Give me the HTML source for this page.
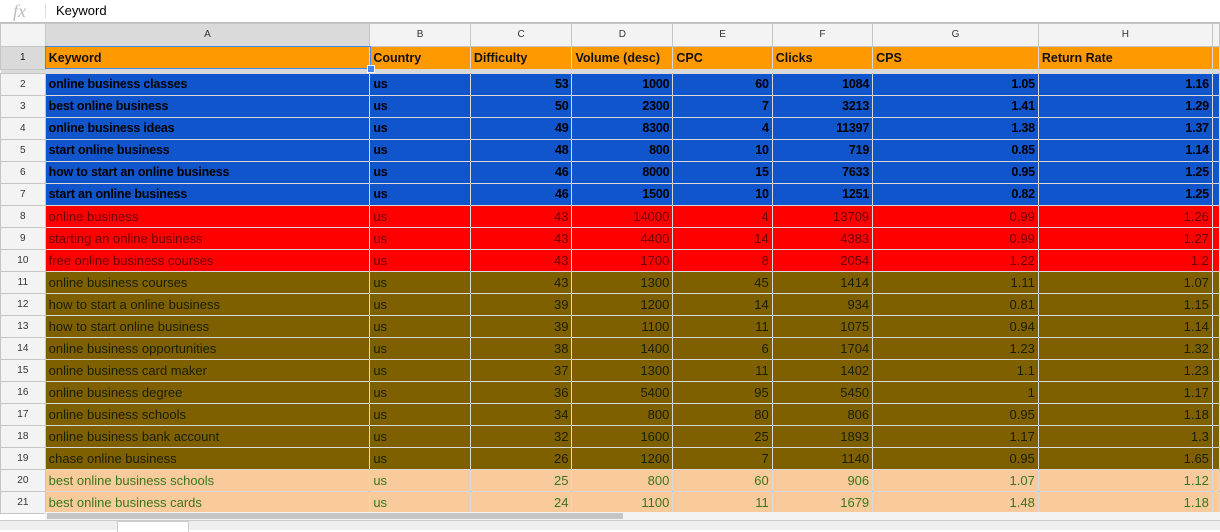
<!DOCTYPE html>
<html><head><style>
body{margin:0;width:1220px;height:529px;overflow:hidden;background:#fff;font-family:"Liberation Sans",sans-serif;position:relative}
.fx{position:absolute;left:0;top:0;width:1220px;height:22px;border-bottom:1px solid #c0c0c0;background:#fff}
.fx i{position:absolute;left:13px;top:1px;font-family:"Liberation Serif",serif;font-size:18px;color:#bbb}
.fx .sep{position:absolute;left:45px;top:3px;width:1px;height:15px;background:#ddd}
.fx span{position:absolute;left:56px;top:3px;font-size:13px;color:#000}
table{position:absolute;left:0;top:23px;border-collapse:collapse;table-layout:fixed}
td{padding:0 3px;font-size:13px;white-space:nowrap;overflow:hidden;border:1px solid rgba(0,0,0,.15);height:21px;line-height:21px;vertical-align:top}
td b,td span{display:block;position:relative;top:1px}
td.n{background:#f3f3f3;color:#333;font-size:10px;text-align:center;border-color:#c6c6c6;padding:0;line-height:21px}
tr.h td{background:#f3f3f3;color:#333;font-size:10px;text-align:center;height:22px;line-height:22px;border-color:#c6c6c6}
tr.h td.sel{background:#dadada}
tr.r1 td{background:#ff9900;font-weight:bold;font-size:12.5px;color:#111;height:21px;line-height:22px}
tr.r1 td.n{background:#dadada;font-weight:normal;font-size:10px}
tr.fz td{height:3px;line-height:3px;font-size:1px;background:#dadada;border:none;padding:0}
.R{text-align:right}
tr.b td{background:#1155cc;font-weight:bold;font-size:12.5px;color:#000;letter-spacing:-0.2px;line-height:23px}
tr.rd td{background:#ff0000;color:#6a0000;line-height:23px}
tr.br td{background:#7f6000;color:#1a1f00;line-height:23px}
tr.p td{background:#f9cb9c;color:#38761d;line-height:23px}
tr.b td.n,tr.rd td.n,tr.br td.n,tr.p td.n{background:#f3f3f3;color:#333;font-weight:normal;font-size:10px;letter-spacing:0;line-height:21px}
tr td{max-height:21px}
.selbox{position:absolute;left:45px;top:46px;width:324px;height:21px;border:1px solid #4285f4}
.hnd{position:absolute;left:367px;top:65px;width:6px;height:6px;background:#4285f4;border:1px solid #fff}
.scroll{position:absolute;left:45px;top:512px;width:1175px;height:8px;background:#f3f3f3}
.scroll div{position:absolute;left:2px;top:1px;width:576px;height:6px;background:#c6c6c6}
.tabs{position:absolute;left:0;top:520px;width:1220px;height:9px;background:#eee;border-top:1px solid #ccc}
.tabs div{position:absolute;left:117px;top:0;width:70px;height:10px;background:#fff;border:1px solid #ccc;border-bottom:none}
tr.b td:not(.n),tr.rd td:not(.n),tr.br td:not(.n),tr.p td:not(.n){line-height:21px;padding-top:0}
tr.b,tr.rd,tr.br,tr.p{height:22px}
</style></head><body>
<div class="fx"><i>fx</i><div class="sep"></div><span>Keyword</span></div>
<table>
<colgroup><col style="width:45px"><col style="width:326px"><col style="width:101px"><col style="width:102px"><col style="width:101px"><col style="width:100px"><col style="width:101px"><col style="width:167px"><col style="width:175px"><col style="width:2px"></colgroup>
<tr class="h"><td></td><td class="sel">A</td><td>B</td><td>C</td><td>D</td><td>E</td><td>F</td><td>G</td><td>H</td><td></td></tr>
<tr class="r1"><td class="n">1</td><td>Keyword</td><td>Country</td><td>Difficulty</td><td>Volume (desc)</td><td>CPC</td><td>Clicks</td><td>CPS</td><td>Return Rate</td><td></td></tr>
<tr class="fz"><td colspan="10"></td></tr>
<tr class="b"><td class="n">2</td><td>online business classes</td><td>us</td><td class="R">53</td><td class="R">1000</td><td class="R">60</td><td class="R">1084</td><td class="R">1.05</td><td class="R">1.16</td><td></td></tr>
<tr class="b"><td class="n">3</td><td>best online business</td><td>us</td><td class="R">50</td><td class="R">2300</td><td class="R">7</td><td class="R">3213</td><td class="R">1.41</td><td class="R">1.29</td><td></td></tr>
<tr class="b"><td class="n">4</td><td>online business ideas</td><td>us</td><td class="R">49</td><td class="R">8300</td><td class="R">4</td><td class="R">11397</td><td class="R">1.38</td><td class="R">1.37</td><td></td></tr>
<tr class="b"><td class="n">5</td><td>start online business</td><td>us</td><td class="R">48</td><td class="R">800</td><td class="R">10</td><td class="R">719</td><td class="R">0.85</td><td class="R">1.14</td><td></td></tr>
<tr class="b"><td class="n">6</td><td>how to start an online business</td><td>us</td><td class="R">46</td><td class="R">8000</td><td class="R">15</td><td class="R">7633</td><td class="R">0.95</td><td class="R">1.25</td><td></td></tr>
<tr class="b"><td class="n">7</td><td>start an online business</td><td>us</td><td class="R">46</td><td class="R">1500</td><td class="R">10</td><td class="R">1251</td><td class="R">0.82</td><td class="R">1.25</td><td></td></tr>
<tr class="rd"><td class="n">8</td><td>online business</td><td>us</td><td class="R">43</td><td class="R">14000</td><td class="R">4</td><td class="R">13709</td><td class="R">0.99</td><td class="R">1.26</td><td></td></tr>
<tr class="rd"><td class="n">9</td><td>starting an online business</td><td>us</td><td class="R">43</td><td class="R">4400</td><td class="R">14</td><td class="R">4383</td><td class="R">0.99</td><td class="R">1.27</td><td></td></tr>
<tr class="rd"><td class="n">10</td><td>free online business courses</td><td>us</td><td class="R">43</td><td class="R">1700</td><td class="R">8</td><td class="R">2054</td><td class="R">1.22</td><td class="R">1.2</td><td></td></tr>
<tr class="br"><td class="n">11</td><td>online business courses</td><td>us</td><td class="R">43</td><td class="R">1300</td><td class="R">45</td><td class="R">1414</td><td class="R">1.11</td><td class="R">1.07</td><td></td></tr>
<tr class="br"><td class="n">12</td><td>how to start a online business</td><td>us</td><td class="R">39</td><td class="R">1200</td><td class="R">14</td><td class="R">934</td><td class="R">0.81</td><td class="R">1.15</td><td></td></tr>
<tr class="br"><td class="n">13</td><td>how to start online business</td><td>us</td><td class="R">39</td><td class="R">1100</td><td class="R">11</td><td class="R">1075</td><td class="R">0.94</td><td class="R">1.14</td><td></td></tr>
<tr class="br"><td class="n">14</td><td>online business opportunities</td><td>us</td><td class="R">38</td><td class="R">1400</td><td class="R">6</td><td class="R">1704</td><td class="R">1.23</td><td class="R">1.32</td><td></td></tr>
<tr class="br"><td class="n">15</td><td>online business card maker</td><td>us</td><td class="R">37</td><td class="R">1300</td><td class="R">11</td><td class="R">1402</td><td class="R">1.1</td><td class="R">1.23</td><td></td></tr>
<tr class="br"><td class="n">16</td><td>online business degree</td><td>us</td><td class="R">36</td><td class="R">5400</td><td class="R">95</td><td class="R">5450</td><td class="R">1</td><td class="R">1.17</td><td></td></tr>
<tr class="br"><td class="n">17</td><td>online business schools</td><td>us</td><td class="R">34</td><td class="R">800</td><td class="R">80</td><td class="R">806</td><td class="R">0.95</td><td class="R">1.18</td><td></td></tr>
<tr class="br"><td class="n">18</td><td>online business bank account</td><td>us</td><td class="R">32</td><td class="R">1600</td><td class="R">25</td><td class="R">1893</td><td class="R">1.17</td><td class="R">1.3</td><td></td></tr>
<tr class="br"><td class="n">19</td><td>chase online business</td><td>us</td><td class="R">26</td><td class="R">1200</td><td class="R">7</td><td class="R">1140</td><td class="R">0.95</td><td class="R">1.65</td><td></td></tr>
<tr class="p"><td class="n">20</td><td>best online business schools</td><td>us</td><td class="R">25</td><td class="R">800</td><td class="R">60</td><td class="R">906</td><td class="R">1.07</td><td class="R">1.12</td><td></td></tr>
<tr class="p"><td class="n">21</td><td>best online business cards</td><td>us</td><td class="R">24</td><td class="R">1100</td><td class="R">11</td><td class="R">1679</td><td class="R">1.48</td><td class="R">1.18</td><td></td></tr>
</table>
<div class="selbox"></div><div class="hnd"></div>
<div class="scroll"><div></div></div>
<div class="tabs"><div></div></div>
</body></html>
